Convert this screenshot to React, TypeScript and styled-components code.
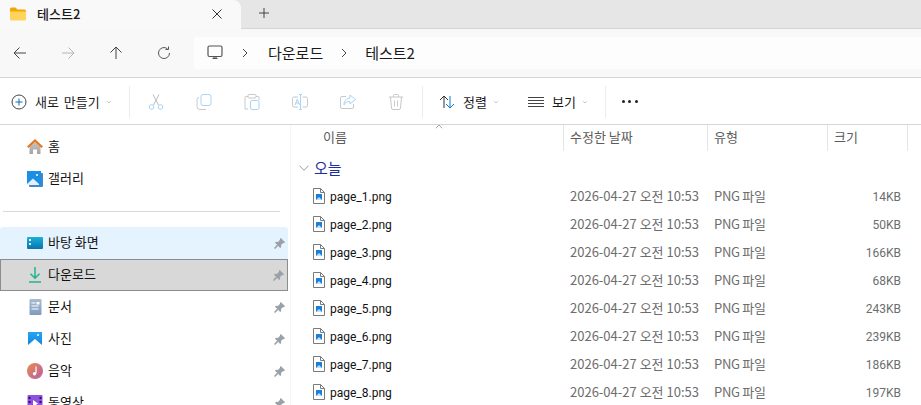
import React from 'react';
import styled, { createGlobalStyle } from 'styled-components';

const GlobalStyle = createGlobalStyle`
  html, body {
    margin: 0;
    padding: 0;
    background: #fff;
  }
  * {
    box-sizing: border-box;
  }
`;

const FONT = `"Noto Sans CJK KR", "Noto Sans", sans-serif`;
const LATIN = `Roboto, "Noto Sans CJK KR", sans-serif`;

const files = [
  { name: 'page_1.png', size: '14KB' },
  { name: 'page_2.png', size: '50KB' },
  { name: 'page_3.png', size: '166KB' },
  { name: 'page_4.png', size: '68KB' },
  { name: 'page_5.png', size: '243KB' },
  { name: 'page_6.png', size: '239KB' },
  { name: 'page_7.png', size: '186KB' },
  { name: 'page_8.png', size: '197KB' },
];

const Line = ({ d, color = '#333', width = 1, size = 16 }: { d: string; color?: string; width?: number; size?: number }) => (
  <svg width={size} height={size} viewBox="0 0 16 16" fill="none" stroke={color} strokeWidth={width}>
    <path d={d} />
  </svg>
);

const Chevron = () => (
  <S.Caret>
    <Line d="M4.500 6.500 8 10l3.500-3.500" color="#888" size={8} />
  </S.Caret>
);

const FolderIcon = () => (
  <svg width="16" height="14" viewBox="0 0 16 14">
    <path d="M0 2a1.500 1.500 0 0 1 1.500-1.500h4l2 2h7A1.500 1.500 0 0 1 16 4v2H0z" fill="#f0a800" />
    <path d="M0 4.500h16V12a1.500 1.500 0 0 1-1.500 1.500h-13A1.500 1.500 0 0 1 0 12z" fill="#ffd35c" />
  </svg>
);

const PinIcon = () => (
  <svg width="11" height="11" viewBox="0 0 11 11">
    <path d="M6.800 0 11 4.200 10 5.200 9.200 4.900 7 7.100 7.200 9 6.200 10 1 4.800 2 3.800 3.900 4 6.100 1.800 5.800 1z" fill="#9aa1a8" />
    <path d="M3.600 7.400 0.500 10.500" stroke="#9aa1a8" strokeWidth="1.500" />
  </svg>
);

const HomeIcon = () => (
  <svg width="16" height="16" viewBox="0 0 16 16">
    <defs>
      <linearGradient id="homeWall" x1="0" y1="0" x2="0" y2="1">
        <stop offset="0" stopColor="#c9c4bf" />
        <stop offset="1" stopColor="#a6a6a6" />
      </linearGradient>
    </defs>
    <path d="M2.500 7.500 8 2.500l5.500 5V15H10v-4.500H6V15H2.500z" fill="url(#homeWall)" />
    <path d="M0.700 8.300 8 1.400l7.300 6.900" fill="none" stroke="#e8761a" strokeWidth="2" />
  </svg>
);

const GalleryIcon = () => (
  <svg width="16" height="16" viewBox="0 0 16 16">
    <rect x="2" y="2" width="14" height="14" rx="1" fill="#3f87cf" />
    <rect x="0" y="0" width="14" height="14" fill="#1b8fe6" />
    <circle cx="10" cy="4" r="1" fill="#fff" />
    <path d="M0 13 6 7.500 12 13v1H0z" fill="#e3effa" />
  </svg>
);

const DesktopIcon = () => (
  <svg width="16" height="12" viewBox="0 0 16 12">
    <defs>
      <linearGradient id="desk" x1="0" y1="0" x2="0" y2="1">
        <stop offset="0" stopColor="#1ab0d8" />
        <stop offset="1" stopColor="#0b74ad" />
      </linearGradient>
    </defs>
    <rect width="16" height="12" rx="1" fill="url(#desk)" />
    <rect x="2" y="2" width="2" height="2" fill="#e8fbff" />
    <rect x="2" y="6" width="2" height="2" fill="#e8fbff" />
  </svg>
);

const DownloadIcon = () => (
  <svg width="14" height="16" viewBox="0 0 14 16" fill="none" stroke="#1fb28e" strokeWidth="1.500">
    <path d="M7 0v11M2.500 6.800 7 11.300l4.500-4.500M1 15h12" />
  </svg>
);

const DocumentIcon = () => (
  <svg width="14" height="16" viewBox="0 0 14 16">
    <defs>
      <linearGradient id="doc" x1="0" y1="0" x2="0" y2="1">
        <stop offset="0" stopColor="#a9bcd3" />
        <stop offset="1" stopColor="#7f9cbd" />
      </linearGradient>
    </defs>
    <rect x="1.500" width="12" height="16" rx="1" fill="url(#doc)" />
    <path d="M3.500 4h4M3.500 7h7M3.500 10h7" stroke="#fff" strokeWidth="1" />
    <rect x="8.500" y="3" width="3" height="2.500" fill="#fff" />
  </svg>
);

const PictureIcon = () => (
  <svg width="16" height="16" viewBox="0 0 16 16">
    <defs>
      <linearGradient id="pic" x1="0" y1="0" x2="0" y2="1">
        <stop offset="0" stopColor="#27a4f5" />
        <stop offset="1" stopColor="#1282d8" />
      </linearGradient>
    </defs>
    <rect x="1" y="1" width="14" height="14" fill="url(#pic)" />
    <circle cx="11" cy="4" r="1" fill="#fff" />
    <path d="M1 14 8 8l7 6v1H1z" fill="#fff" />
  </svg>
);

const MusicIcon = () => (
  <svg width="16" height="16" viewBox="0 0 16 16">
    <defs>
      <linearGradient id="music" x1="0" y1="0" x2="1" y2="1">
        <stop offset="0" stopColor="#ec8a4a" />
        <stop offset="1" stopColor="#b65ea8" />
      </linearGradient>
    </defs>
    <circle cx="8" cy="8" r="8" fill="url(#music)" />
    <path d="M9 3.500v7" stroke="#fff" strokeWidth="1.200" />
    <circle cx="7.500" cy="10.800" r="1.700" fill="#fff" />
  </svg>
);

const VideoIcon = () => (
  <svg width="16" height="16" viewBox="0 0 16 16">
    <rect width="15" height="15" x="0.500" rx="1" fill="#8f4fe0" />
    <path d="M6 5l5 3.500-5 3.500z" fill="#fff" />
    <rect x="1.500" y="2" width="2" height="2" fill="#2b1450" />
    <rect x="1.500" y="6" width="2" height="2" fill="#2b1450" />
    <rect x="1.500" y="10" width="2" height="2" fill="#2b1450" />
    <rect x="12.500" y="2" width="2" height="2" fill="#2b1450" />
    <rect x="12.500" y="6" width="2" height="2" fill="#2b1450" />
    <rect x="12.500" y="10" width="2" height="2" fill="#2b1450" />
  </svg>
);

const PngIcon = () => (
  <svg width="12" height="16" viewBox="0 0 12 16">
    <path d="M0.500 0.500h7l4 4v11h-11z" fill="#fff" stroke="#7a7a7a" />
    <path d="M7.500 0.500v4h4" fill="none" stroke="#7a7a7a" />
    <rect x="3" y="6" width="6" height="6" fill="#1c7fd6" />
    <path d="M3 12l3-3 3 3z" fill="#bfe0fa" />
  </svg>
);

const sidebarItems = [
  { label: '바탕 화면', icon: <DesktopIcon />, selected: 'hover' },
  { label: '다운로드', icon: <DownloadIcon />, selected: 'active' },
  { label: '문서', icon: <DocumentIcon /> },
  { label: '사진', icon: <PictureIcon /> },
  { label: '음악', icon: <MusicIcon /> },
  { label: '동영상', icon: <VideoIcon /> },
];

const App = () => {
  return (
    <S.Window>
      <GlobalStyle />
      <S.TabBar>
        <S.Tab>
          <FolderIcon />
          <S.TabTitle>테스트2</S.TabTitle>
          <Line d="M3.500 3.500l9 9M12.500 3.500l-9 9" color="#333" size={16} />
        </S.Tab>
        <S.NewTab>
          <Line d="M8 3v10M3 8h10" color="#444" />
        </S.NewTab>
      </S.TabBar>

      <S.NavBar>
        <S.NavButtons>
          <S.NavButton><Line d="M14 8H2M7.500 2.500 2 8l5.500 5.500" color="#444" /></S.NavButton>
          <S.NavButton><Line d="M2 8h12M8.500 2.500 14 8l-5.500 5.500" color="#b5b5b5" /></S.NavButton>
          <S.NavButton><Line d="M8 14V2M2.500 7.500 8 2l5.500 5.500" color="#444" /></S.NavButton>
          <S.NavButton><Line d="M13.500 8A5.500 5.500 0 1 1 11.500 3.800M12.500 1.500v3h-3" color="#555" /></S.NavButton>
        </S.NavButtons>
        <S.AddressBox>
          <svg width="16" height="16" viewBox="0 0 16 16" fill="none" stroke="#555" strokeWidth="1.200">
            <rect x="1" y="1" width="14" height="10.500" rx="1.500" />
            <path d="M5.500 13.500h5M7 11.500v2M9 11.500v2" />
          </svg>
          <S.Crumb $before={14} $after={15}><Line d="M6 4l4 4-4 4" color="#444" /></S.Crumb>
          <S.CrumbText>다운로드</S.CrumbText>
          <S.Crumb $before={13} $after={13}><Line d="M6 4l4 4-4 4" color="#444" /></S.Crumb>
          <S.CrumbText>테스트2</S.CrumbText>
        </S.AddressBox>
      </S.NavBar>

      <S.Toolbar>
        <S.NewButton>
          <svg width="16" height="16" viewBox="0 0 16 16" fill="none">
            <circle cx="8" cy="8" r="7" stroke="#444" />
            <path d="M8 4.500v7M4.500 8h7" stroke="#0a6cc4" />
          </svg>
          <S.NewLabel>새로 만들기</S.NewLabel>
          <Chevron />
        </S.NewButton>
        <S.Divider />
        <S.ToolIcons>
          <svg width="16" height="16" viewBox="0 0 16 16" fill="none" stroke="#a8d4f8">
            <path d="M5 0.500 10.500 11M11 0.500 5.500 11" stroke="#bbb" />
            <circle cx="3.500" cy="13" r="2.300" />
            <circle cx="12.500" cy="13" r="2.300" />
          </svg>
          <svg width="16" height="16" viewBox="0 0 16 16" fill="none">
            <rect x="5" y="0.500" width="10" height="11" rx="2" stroke="#a8d4f8" />
            <path d="M3 3.500a2 2 0 0 0-2 2v7a3 3 0 0 0 3 3h6" stroke="#c8c8c8" />
          </svg>
          <svg width="16" height="16" viewBox="0 0 16 16" fill="none">
            <path d="M4 2.500H2a1 1 0 0 0-1 1V15h3M12 2.500h2a1 1 0 0 1 1 1V6" stroke="#c8c8c8" />
            <rect x="4" y="0.500" width="8" height="3.500" rx="1" stroke="#c8c8c8" />
            <rect x="6.500" y="6.500" width="8.500" height="9" rx="1.500" stroke="#a8d4f8" />
          </svg>
          <svg width="16" height="16" viewBox="0 0 16 16" fill="none">
            <path d="M6 3H2a1.500 1.500 0 0 0-1.500 1.500v7A1.500 1.500 0 0 0 2 13h4M10.500 3H14a1.500 1.500 0 0 1 1.500 1.500v7A1.500 1.500 0 0 1 14 13h-3.500" stroke="#c8c8c8" />
            <path d="M8.500 0.500v15M7 0.500h3M7 15.500h3" stroke="#a8d4f8" />
            <path d="M3 11 5.300 5 7.500 11M4 9h3" stroke="#a8d4f8" />
          </svg>
          <svg width="16" height="16" viewBox="0 0 16 16" fill="none">
            <path d="M6 2.500H2A1.500 1.500 0 0 0 0.500 4v9A1.500 1.500 0 0 0 2 14.500h10a1.500 1.500 0 0 0 1.500-1.500v-3" stroke="#c8c8c8" />
            <path d="M10 1l5.500 4.500L10 10V7.500C7 7.500 5 8.500 4 11c0-4 2.500-7 6-7z" stroke="#a8d4f8" />
          </svg>
          <svg width="16" height="16" viewBox="0 0 16 16" fill="none" stroke="#c8c8c8">
            <path d="M1 3h14M5.500 3V1.500A1 1 0 0 1 6.500 0.500h3a1 1 0 0 1 1 1V3M2.500 3l1 11a1.500 1.500 0 0 0 1.500 1.500h6a1.500 1.500 0 0 0 1.500-1.500l1-11M6.500 6.500v6M9.500 6.500v6" />
          </svg>
        </S.ToolIcons>
        <S.Divider />
        <S.SortButton>
          <svg width="16" height="16" viewBox="0 0 16 16" fill="none">
            <path d="M5 14V2M1 6l4-4 4 4" stroke="#333" />
            <path d="M11 2v12M7 10l4 4 4-4" stroke="#0a78d4" />
          </svg>
          <span>정렬</span>
          <Chevron />
        </S.SortButton>
        <S.ViewButton>
          <svg width="16" height="16" viewBox="0 0 16 16" fill="none" stroke="#444">
            <path d="M0 3.500h16M0 6.500h16M0 9.500h16M0 12.500h16" />
          </svg>
          <span>보기</span>
          <Chevron />
        </S.ViewButton>
        <S.Divider />
        <S.MoreButton>
          <S.Dot /><S.Dot /><S.Dot />
        </S.MoreButton>
      </S.Toolbar>

      <S.Body>
        <S.Sidebar>
          <S.SideRow>
            <HomeIcon />
            <S.SideLabel>홈</S.SideLabel>
          </S.SideRow>
          <S.SideRow>
            <GalleryIcon />
            <S.SideLabel>갤러리</S.SideLabel>
          </S.SideRow>
          <S.SideDivider />
          {sidebarItems.map((item) => (
            <S.SideRow key={item.label} $state={item.selected}>
              <S.SideIcon>{item.icon}</S.SideIcon>
              <S.SideLabel>{item.label}</S.SideLabel>
              <S.Pin><PinIcon /></S.Pin>
            </S.SideRow>
          ))}
        </S.Sidebar>

        <S.List>
          <S.Header>
            <S.HeaderCell $indent={32}>
              이름
              <S.SortCaret>
                <Line d="M3 10l5-5 5 5" color="#666" size={10} />
              </S.SortCaret>
            </S.HeaderCell>
            <S.HeaderCell>수정한 날짜</S.HeaderCell>
            <S.HeaderCell>유형</S.HeaderCell>
            <S.HeaderCell>크기</S.HeaderCell>
          </S.Header>
          <S.Group>
            <Line d="M2 5l6 6 6-6" color="#777" size={12} />
            <S.GroupTitle>오늘</S.GroupTitle>
          </S.Group>
          {files.map((file) => (
            <S.FileRow key={file.name}>
              <S.FileName>
                <PngIcon />
                <S.NameText>{file.name}</S.NameText>
              </S.FileName>
              <S.Meta>2026-04-27 오전 10:53</S.Meta>
              <S.Kind>PNG 파일</S.Kind>
              <S.Size>{file.size}</S.Size>
            </S.FileRow>
          ))}
        </S.List>
      </S.Body>
    </S.Window>
  );
};

export default App;

const S = {
  Window: styled.div`
    width: 921px;
    height: 405px;
    overflow: hidden;
    background: #fff;
    font-family: ${FONT};
    font-size: 13px;
    line-height: 16px;
    color: #1a1a1a;
  `,

  TabBar: styled.div`
    display: flex;
    height: 29px;
    background: #e6e6e6;
    border-bottom: 1px solid #d6d6d6;
  `,

  Tab: styled.div`
    display: flex;
    align-items: center;
    width: 241px;
    height: 29px;
    padding: 0 16px 2px 10px;
    background: #f9f9f9;
    border-top-right-radius: 8px;
  `,

  TabTitle: styled.span`
    flex: 1;
    margin-left: 11px;
    font-weight: 500;
  `,

  NewTab: styled.div`
    display: flex;
    align-items: center;
    margin-left: 15px;
    padding-bottom: 2px;
  `,

  NavBar: styled.div`
    display: flex;
    align-items: center;
    height: 49px;
    padding-left: 12px;
    background: #f8f8f8;
    border-bottom: 1px solid #d6d6d6;
  `,

  NavButtons: styled.div`
    display: flex;
    gap: 32px;
    width: 182px;
  `,

  NavButton: styled.div`
    display: flex;
  `,

  AddressBox: styled.div`
    display: flex;
    align-items: center;
    flex: 1;
    height: 32px;
    padding-left: 13px;
    background: #fdfdfd;
    border-radius: 4px 0 0 4px;
  `,

  Crumb: styled.span<{ $before: number; $after: number }>`
    display: flex;
    margin: 0 ${(p) => p.$after}px 0 ${(p) => p.$before}px;
  `,

  CrumbText: styled.span`
    font-size: 15px;
  `,

  Toolbar: styled.div`
    display: flex;
    align-items: center;
    height: 47px;
    padding: 1px 0 0 11px;
    background: #fff;
    border-bottom: 1px solid #d6d6d6;
  `,

  NewButton: styled.div`
    display: flex;
    align-items: center;
    gap: 8px;
    width: 118px;
  `,

  NewLabel: styled.span`
    word-spacing: 2px;
  `,

  Caret: styled.span`
    display: flex;
    margin-left: -3px;
  `,

  Divider: styled.div`
    width: 1px;
    height: 32px;
    background: #ececec;
  `,

  ToolIcons: styled.div`
    display: flex;
    gap: 32px;
    padding: 0 18px;
  `,

  SortButton: styled.div`
    display: flex;
    align-items: center;
    gap: 8px;
    margin-left: 16px;
  `,

  ViewButton: styled.div`
    display: flex;
    align-items: center;
    gap: 8px;
    margin: 0 16px 0 28px;
  `,

  MoreButton: styled.div`
    display: flex;
    gap: 3.5px;
    margin-left: 16px;
  `,

  Dot: styled.span`
    width: 3px;
    height: 3px;
    border-radius: 50%;
    background: #222;
  `,

  Body: styled.div`
    display: flex;
    height: 280px;
  `,

  Sidebar: styled.div`
    flex: none;
    width: 291px;
    padding: 6px 2px 0 0;
    border-right: 1px solid #f5f5f5;
    overflow: hidden;
  `,

  SideRow: styled.div<{ $state?: string }>`
    display: flex;
    align-items: center;
    height: 32px;
    padding: 0 3px 0 ${(p) => (p.$state === 'active' ? '26px' : '27px')};
    border-radius: ${(p) => (p.$state === 'hover' ? '3px 3px 0 0' : '0')};
    background: ${(p) => (p.$state === 'hover' ? '#e5f3ff' : p.$state === 'active' ? '#d8d8d8' : 'transparent')};
    border: ${(p) => (p.$state === 'active' ? '1px solid #8c8c8c' : 'none')};
  `,

  SideIcon: styled.span`
    display: flex;
    justify-content: center;
    width: 16px;
  `,

  SideLabel: styled.span`
    flex: 1;
    margin: 0 0 2px 5px;
    color: #111;
  `,

  Pin: styled.span`
    display: flex;
  `,

  SideDivider: styled.div`
    width: 277px;
    height: 1px;
    margin: 16px 0 15px 3px;
    background: #d9d9d9;
  `,

  List: styled.div`
    flex: 1;
    overflow: hidden;
  `,

  Header: styled.div`
    display: grid;
    grid-template-columns: 273px 144px 120px 80px;
    height: 26px;
  `,

  HeaderCell: styled.div<{ $indent?: number }>`
    position: relative;
    display: flex;
    align-items: center;
    padding: 0 0 2px ${(p) => p.$indent ?? 6}px;
    border-right: 1px solid #e5e5e5;
    color: #5c5c5c;
  `,

  SortCaret: styled.span`
    position: absolute;
    top: -3px;
    left: 143px;
    display: flex;
  `,

  Group: styled.div`
    display: flex;
    align-items: center;
    gap: 4px;
    height: 32px;
    padding: 1px 0 0 7px;
  `,

  GroupTitle: styled.span`
    font-size: 15px;
    color: #1a2fa0;
  `,

  FileRow: styled.div`
    display: grid;
    grid-template-columns: 273px 144px 120px 80px;
    align-items: center;
    height: 28px;
    margin-top: -1px;
    margin-bottom: 1px;
  `,

  FileName: styled.div`
    display: flex;
    align-items: center;
    gap: 5px;
    padding-left: 22px;
    font-family: ${LATIN};
    font-size: 12px;
    color: #111;
  `,

  NameText: styled.span`
    margin-top: 2px;
  `,

  Meta: styled.div`
    padding-left: 6px;
    color: #6d6d6d;
  `,

  Kind: styled.div`
    padding-left: 6px;
    letter-spacing: -0.3px;
    color: #6d6d6d;
  `,

  Size: styled.div`
    margin-top: 2px;
    padding-right: 7px;
    text-align: right;
    font-family: ${LATIN};
    font-size: 12px;
    color: #6d6d6d;
  `,
};
